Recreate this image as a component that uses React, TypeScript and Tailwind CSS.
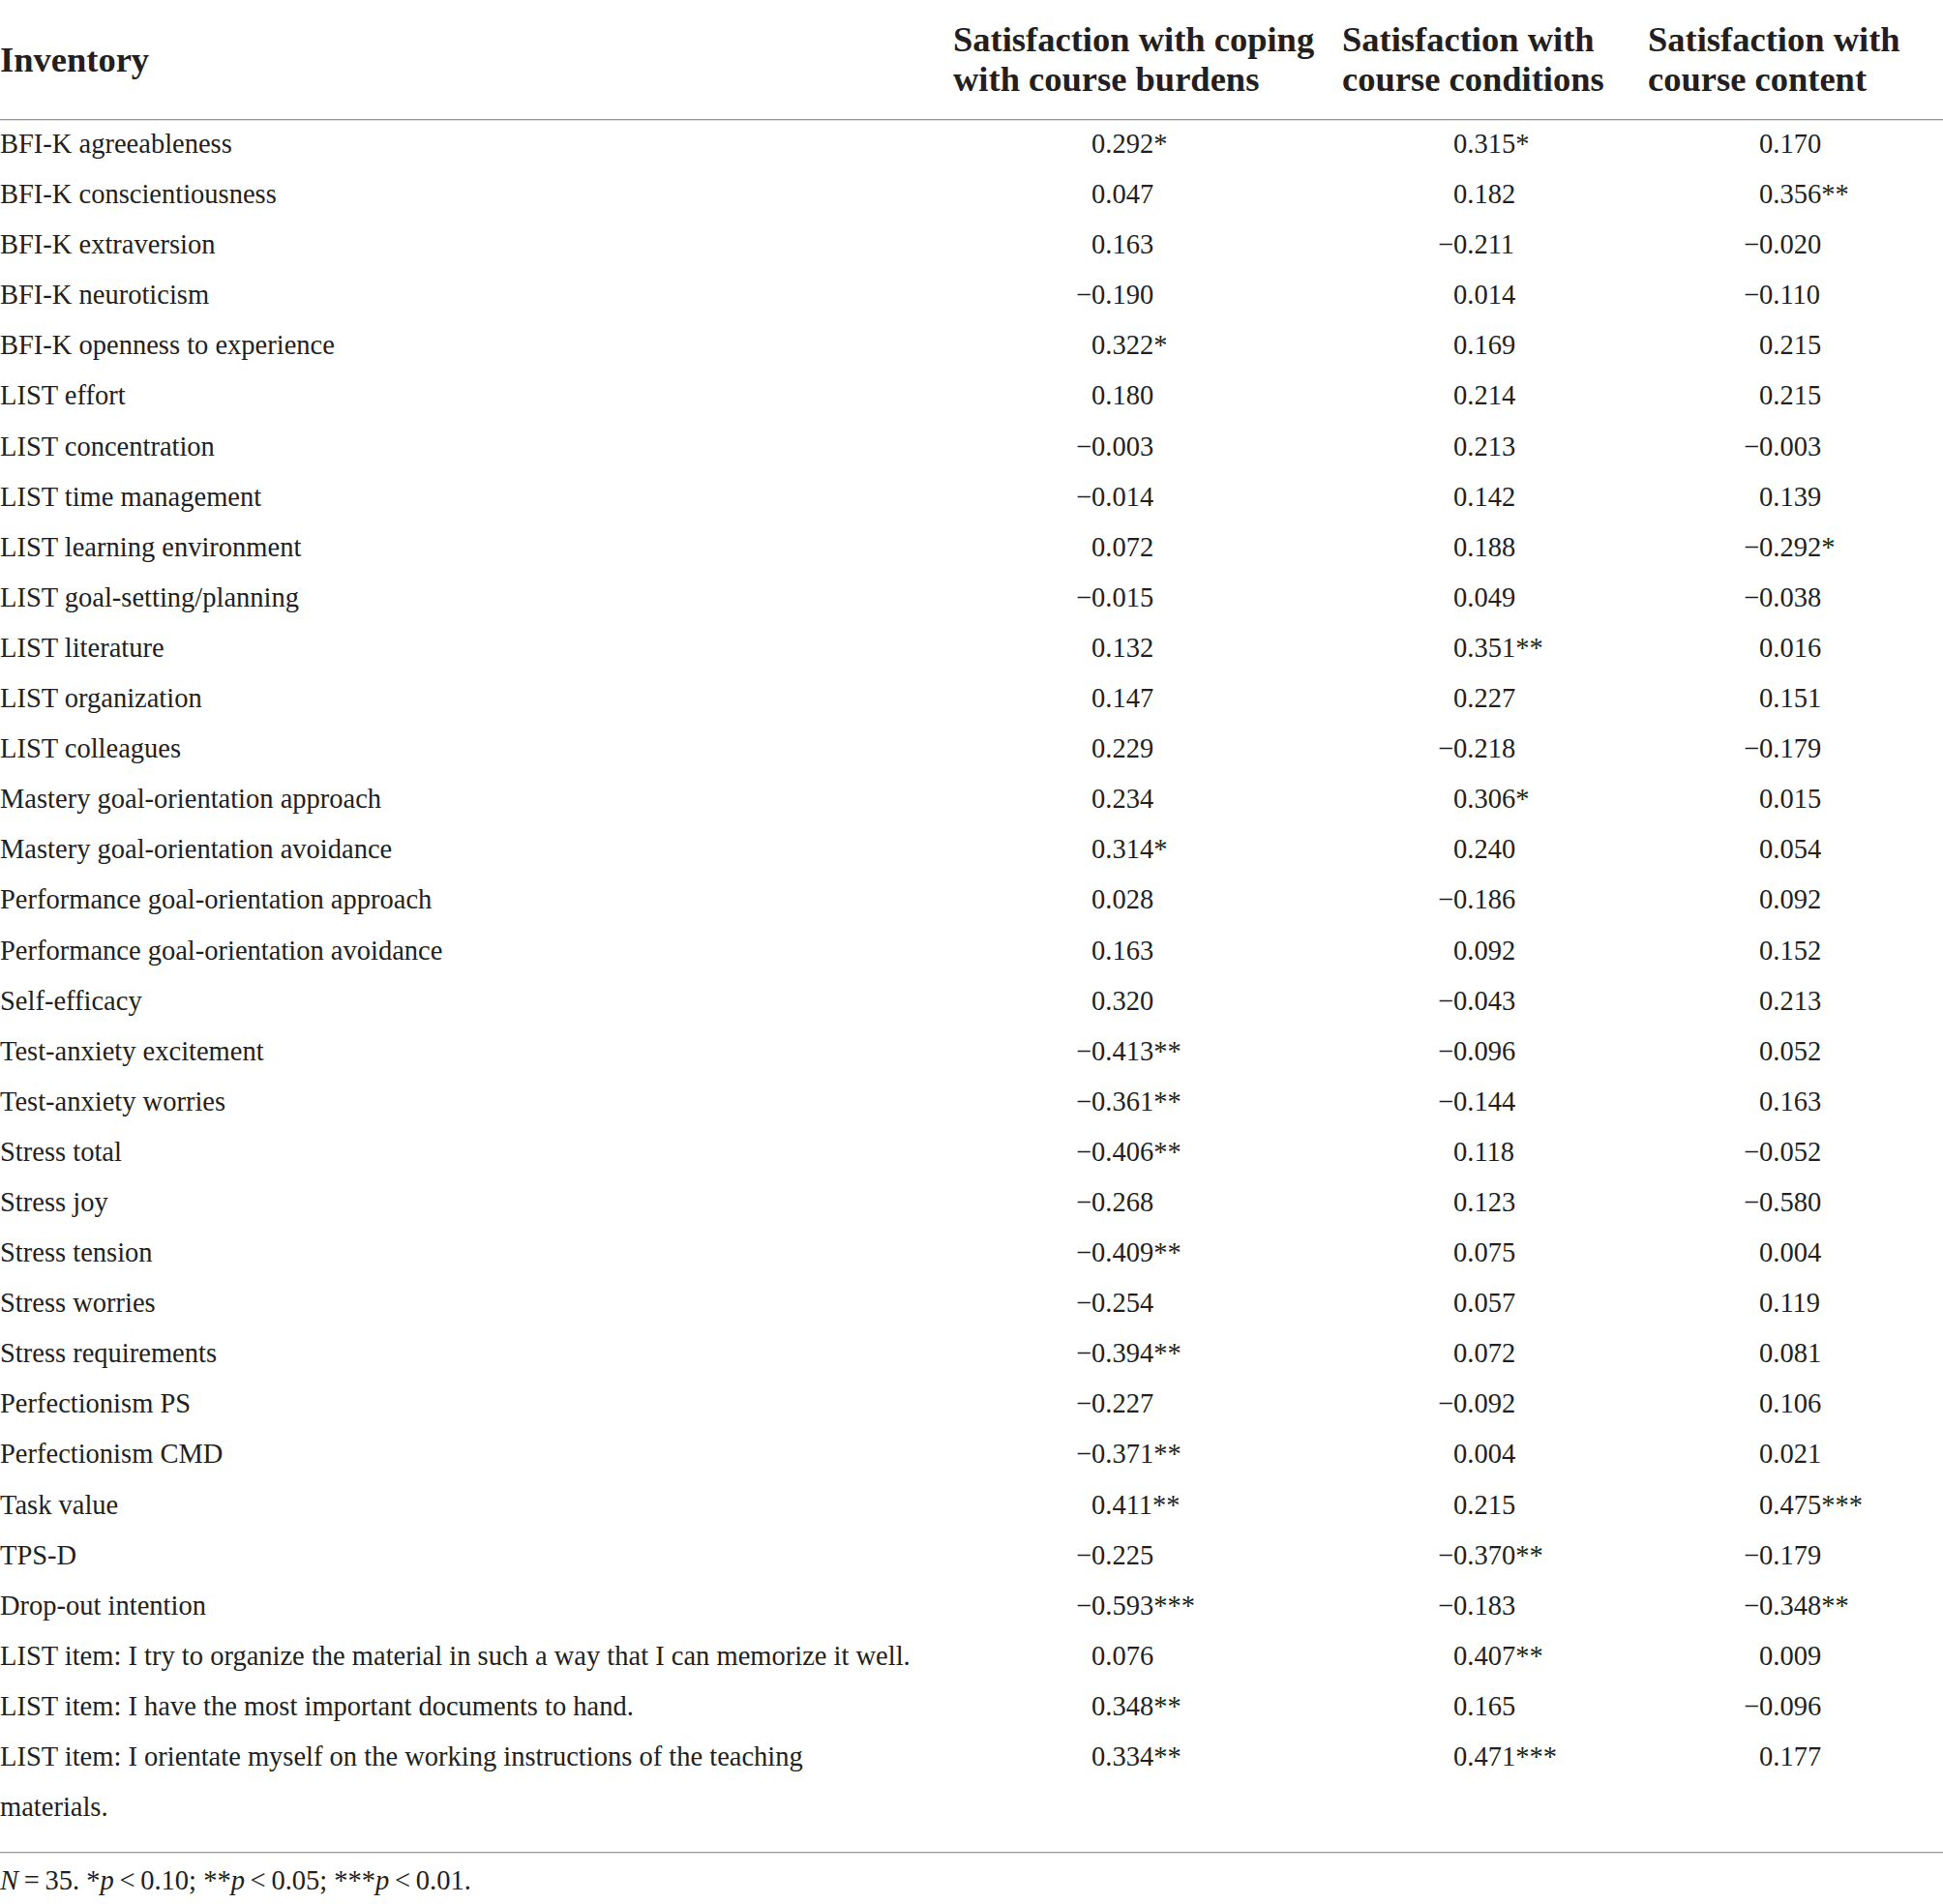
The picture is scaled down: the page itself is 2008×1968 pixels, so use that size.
import React from "react";

type Row = [string, string, string, string];

const rows: Row[] = [
  ["BFI-K agreeableness", "0.292*", "0.315*", "0.170"],
  ["BFI-K conscientiousness", "0.047", "0.182", "0.356**"],
  ["BFI-K extraversion", "0.163", "−0.211", "−0.020"],
  ["BFI-K neuroticism", "−0.190", "0.014", "−0.110"],
  ["BFI-K openness to experience", "0.322*", "0.169", "0.215"],
  ["LIST effort", "0.180", "0.214", "0.215"],
  ["LIST concentration", "−0.003", "0.213", "−0.003"],
  ["LIST time management", "−0.014", "0.142", "0.139"],
  ["LIST learning environment", "0.072", "0.188", "−0.292*"],
  ["LIST goal-setting/planning", "−0.015", "0.049", "−0.038"],
  ["LIST literature", "0.132", "0.351**", "0.016"],
  ["LIST organization", "0.147", "0.227", "0.151"],
  ["LIST colleagues", "0.229", "−0.218", "−0.179"],
  ["Mastery goal-orientation approach", "0.234", "0.306*", "0.015"],
  ["Mastery goal-orientation avoidance", "0.314*", "0.240", "0.054"],
  ["Performance goal-orientation approach", "0.028", "−0.186", "0.092"],
  ["Performance goal-orientation avoidance", "0.163", "0.092", "0.152"],
  ["Self-efficacy", "0.320", "−0.043", "0.213"],
  ["Test-anxiety excitement", "−0.413**", "−0.096", "0.052"],
  ["Test-anxiety worries", "−0.361**", "−0.144", "0.163"],
  ["Stress total", "−0.406**", "0.118", "−0.052"],
  ["Stress joy", "−0.268", "0.123", "−0.580"],
  ["Stress tension", "−0.409**", "0.075", "0.004"],
  ["Stress worries", "−0.254", "0.057", "0.119"],
  ["Stress requirements", "−0.394**", "0.072", "0.081"],
  ["Perfectionism PS", "−0.227", "−0.092", "0.106"],
  ["Perfectionism CMD", "−0.371**", "0.004", "0.021"],
  ["Task value", "0.411**", "0.215", "0.475***"],
  ["TPS-D", "−0.225", "−0.370**", "−0.179"],
  ["Drop-out intention", "−0.593***", "−0.183", "−0.348**"],
  ["LIST item: I try to organize the material in such a way that I can memorize it well.", "0.076", "0.407**", "0.009"],
  ["LIST item: I have the most important documents to hand.", "0.348**", "0.165", "−0.096"],
];

function Val({ v, pad }: { v: string; pad: string }) {
  const neg = v.startsWith("−");
  const body = neg ? v.slice(1) : v;
  return (
    <div className={`${pad} whitespace-nowrap`}>
      <span className="inline-block w-[19px] text-right">{neg ? "−" : ""}</span>
      {body}
    </div>
  );
}

export default function App() {
  return (
    <div
      className="w-[2008px] h-[1968px] bg-white text-[#231f20]"
      style={{ fontFamily: '"Liberation Serif", "Times New Roman", serif' }}
    >
      {/* Header */}
      <div className="grid grid-cols-[985px_402px_316px_305px] pt-[20px] pb-[21px] text-[36.5px] leading-[41px] font-bold">
        <div className="flex items-center">Inventory</div>
        <div>
          Satisfaction with coping
          <br />
          with course burdens
        </div>
        <div>
          Satisfaction with
          <br />
          course conditions
        </div>
        <div>
          Satisfaction with
          <br />
          course content
        </div>
      </div>
      <div className="h-px bg-[#9a9a9a]" />
      <div className="h-px bg-[#dcdcdc]" />

      {/* Body */}
      <div className="text-[28.5px] leading-[52px] pb-[20px] -mt-[2px]">
        {rows.map((r, i) => (
          <div key={i} className="grid grid-cols-[985px_402px_316px_305px] h-[52.1px]">
            <div className="whitespace-nowrap">{r[0]}</div>
            <Val v={r[1]} pad="pl-[124px]" />
            <Val v={r[2]} pad="pl-[96px]" />
            <Val v={r[3]} pad="pl-[96px]" />
          </div>
        ))}
        <div className="grid grid-cols-[985px_402px_316px_305px]">
          <div>
            LIST item: I orientate myself on the working instructions of the teaching
            <br />
            materials.
          </div>
          <Val v="0.334**" pad="pl-[124px]" />
          <Val v="0.471***" pad="pl-[96px]" />
          <Val v="0.177" pad="pl-[96px]" />
        </div>
      </div>
      <div className="h-px bg-[#9a9a9a]" />
      <div className="h-px bg-[#dcdcdc]" />

      {/* Footnote */}
      <div className="text-[28.5px] leading-[56px]">
        <i>N</i>
        {"\u2009=\u200935. *"}
        <i>p</i>
        {"\u2009<\u20090.10; **"}
        <i>p</i>
        {"\u2009<\u20090.05; ***"}
        <i>p</i>
        {"\u2009<\u20090.01."}
      </div>
    </div>
  );
}
